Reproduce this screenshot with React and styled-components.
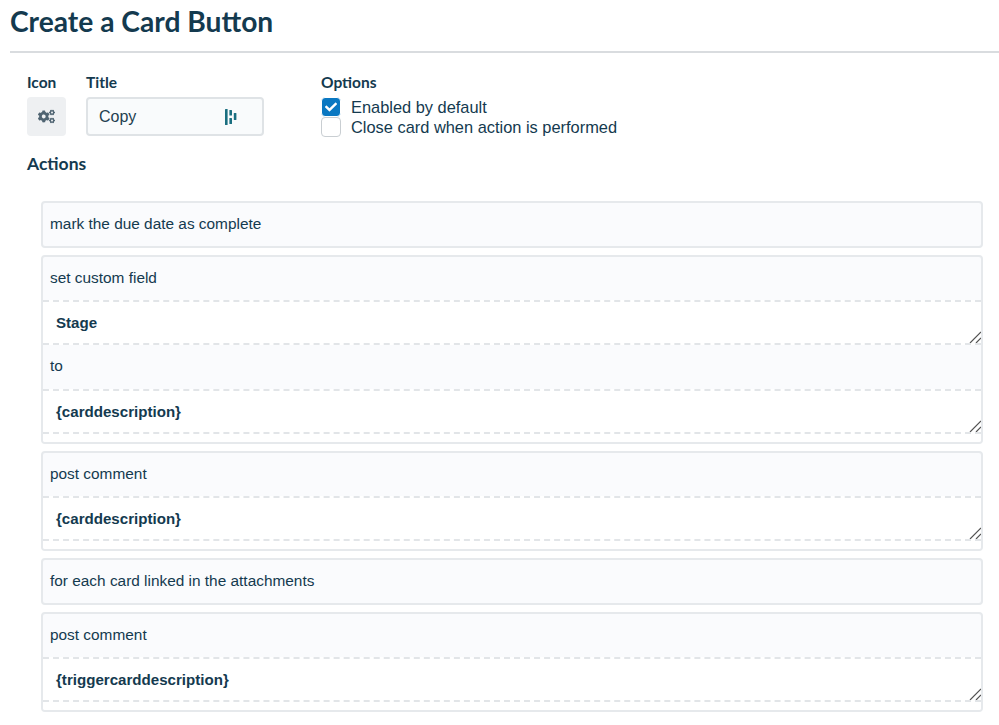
import React from "react";
import styled, { createGlobalStyle } from "styled-components";
import { FaCogs, FaCheck } from "react-icons/fa";

const GlobalStyle = createGlobalStyle`
  * { box-sizing: border-box; }
  html, body { margin: 0; padding: 0; background: #fff; overflow: hidden; }
  body { font-family: "Liberation Sans", Arial, sans-serif; color: #143a4f; }
`;

const Page = styled.div`
  width: 999px;
  height: 725px;
  overflow: hidden;
  padding-left: 10px;
`;

const Heading = styled.h1`
  margin: 0;
  height: 53px;
  padding-top: 4px;
  font-family: Lato, sans-serif;
  font-size: 28.2px;
  line-height: 34px;
  font-weight: 700;
  color: #143a4f;
  border-bottom: 2px solid #d9dcdf;
`;

const Settings = styled.div`
  display: flex;
  padding: 20px 0 0 17px;
`;

const Field = styled.div`
  display: flex;
  flex-direction: column;
  margin-right: ${(p) => p.$gap || 0}px;
`;

const Label = styled.div`
  font-family: Lato, sans-serif;
  font-size: 15.5px;
  line-height: 18px;
  font-weight: 700;
  color: #143a4f;
`;

const IconBox = styled.div`
  width: 39px;
  height: 39px;
  margin-top: 6px;
  border-radius: 4px;
  background: #eef0f2;
  color: #4f6472;
  font-size: 17px;
  display: flex;
  align-items: center;
  justify-content: center;
`;

const TitleBox = styled.div`
  width: 178px;
  height: 39px;
  margin-top: 6px;
  padding: 0 25px 0 11px;
  border: 2px solid #dfe3e6;
  border-radius: 4px;
  background: #f9fbfc;
  font-size: 16px;
  color: #243f50;
  display: flex;
  align-items: center;
  justify-content: space-between;
`;

const OptionList = styled.div`
  display: flex;
  flex-direction: column;
  margin-top: 6px;
`;

const Option = styled.div`
  display: flex;
  align-items: flex-start;
  height: 20px;
  font-size: 16.4px;
  line-height: 21px;
  color: #143a4f;
`;

const CheckBox = styled.span`
  flex: none;
  width: 20px;
  height: 20px;
  margin-right: 10px;
  border-radius: 4px;
  display: flex;
  align-items: center;
  justify-content: center;
  font-size: 12px;
  color: #fff;
  background: ${(p) => (p.$on ? "#0a78c2" : "#fff")};
  border: ${(p) => (p.$on ? "1px solid #fff" : "1px solid #c9ced2")};
`;

const ActionsLabel = styled(Label)`
  margin: 17px 0 0 17px;
  font-size: 17.5px;
  line-height: 20px;
`;

const Cards = styled.div`
  display: flex;
  flex-direction: column;
  gap: 7px;
  width: 942px;
  margin: 27px 0 0 31px;
`;

const Card = styled.div`
  border: 2px solid #e6e9ec;
  border-radius: 4px;
  background: #fafbfd;
  overflow: hidden;
`;

const Row = styled.div`
  height: ${(p) => p.$h || 43}px;
  padding: 0 0 2px 7px;
  font-size: 15.4px;
  color: #143a4f;
  display: flex;
  align-items: center;
`;

const FieldWrap = styled.div`
  background: #fff;
  padding-bottom: ${(p) => p.$pad || 0}px;
`;

const grip = encodeURIComponent(
  '<svg xmlns="http://www.w3.org/2000/svg" width="12" height="12"><path d="M1 12L12 1M7 12L12 7" stroke="#555" stroke-width="1.2" fill="none"/></svg>'
);

const Area = styled.textarea`
  display: block;
  width: 100%;
  height: 45px;
  padding: 12px 13px 0;
  margin: 0;
  border: none;
  border-top: 2px dashed #e2e5e8;
  border-bottom: 2px dashed #e2e5e8;
  outline: none;
  background: #fff;
  font-family: "Liberation Sans", Arial, sans-serif;
  font-size: 15.1px;
  line-height: 18px;
  font-weight: 700;
  color: #143a4f;
  resize: vertical;

  &::-webkit-resizer {
    background: url("data:image/svg+xml,${grip}") no-repeat right bottom;
  }
`;

const BarsIcon = () => (
  <svg width="12" height="16" viewBox="0 0 12 16" fill="#1a6f80">
    <rect x="0" y="0" width="2.6" height="16" rx="0.5" />
    <rect x="4.4" y="1" width="2.6" height="5.5" rx="0.5" />
    <rect x="4.4" y="9" width="2.6" height="6" rx="0.5" />
    <rect x="8.8" y="4" width="2.6" height="7" rx="0.5" />
  </svg>
);

export default function App() {
  return (
    <Page>
      <GlobalStyle />
      <Heading>Create a Card Button</Heading>
      <Settings>
        <Field $gap={20}>
          <Label>Icon</Label>
          <IconBox>
            <FaCogs />
          </IconBox>
        </Field>
        <Field $gap={57}>
          <Label>Title</Label>
          <TitleBox>
            Copy
            <BarsIcon />
          </TitleBox>
        </Field>
        <Field>
          <Label>Options</Label>
          <OptionList>
            <Option>
              <CheckBox $on>
                <FaCheck />
              </CheckBox>
              Enabled by default
            </Option>
            <Option>
              <CheckBox />
              Close card when action is performed
            </Option>
          </OptionList>
        </Field>
      </Settings>
      <ActionsLabel>Actions</ActionsLabel>
      <Cards>
        <Card>
          <Row>mark the due date as complete</Row>
        </Card>
        <Card>
          <Row>set custom field</Row>
          <FieldWrap>
            <Area defaultValue="Stage" />
          </FieldWrap>
          <Row $h={44}>to</Row>
          <FieldWrap $pad={8}>
            <Area defaultValue="{carddescription}" />
          </FieldWrap>
        </Card>
        <Card>
          <Row>post comment</Row>
          <FieldWrap $pad={8}>
            <Area defaultValue="{carddescription}" />
          </FieldWrap>
        </Card>
        <Card>
          <Row>for each card linked in the attachments</Row>
        </Card>
        <Card>
          <Row>post comment</Row>
          <FieldWrap $pad={8}>
            <Area defaultValue="{triggercarddescription}" />
          </FieldWrap>
        </Card>
      </Cards>
    </Page>
  );
}
